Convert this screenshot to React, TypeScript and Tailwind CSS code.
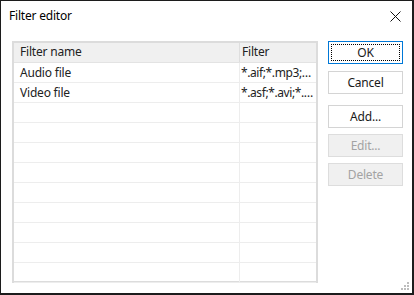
const rows = [
  { name: "Audio file", filter: "*.aif;*.mp3;*.wav;*.wma" },
  { name: "Video file", filter: "*.asf;*.avi;*.mpg;*.wmv" },
  ...Array.from({ length: 9 }, () => ({ name: "", filter: "" })),
];

function DialogButton({
  label,
  disabled,
  focused,
  className = "",
}: {
  label: string;
  disabled?: boolean;
  focused?: boolean;
  className?: string;
}) {
  const base = "h-[23px] w-[75px] text-[12px] leading-none flex items-center justify-center";
  if (focused) {
    return (
      <div className={`${base} border border-[#0078d7] bg-white p-[2px] ${className}`}>
        <div className="w-full h-full border border-dotted border-black flex items-center justify-center text-[#1a1a1a]">
          {label}
        </div>
      </div>
    );
  }
  return (
    <div
      className={`${base} border ${
        disabled
          ? "border-[#dddddd] bg-[#f0f0f0] text-[#a3a3a3]"
          : "border-[#d4d4d4] bg-white text-[#1a1a1a]"
      } ${className}`}
    >
      {label}
    </div>
  );
}

export default function App() {
  return (
    <div
      className="relative w-[414px] h-[295px] bg-white border-l border-t border-r-2 border-b-2 border-[#1c1c1c] overflow-hidden tracking-[-0.2px]"
      style={{ fontFamily: '"Noto Sans", "Liberation Sans", sans-serif' }}
    >
      <div className="flex items-center justify-between h-[30px] pl-[8px] pr-[10px]">
        <span className="text-[12px] text-black">Filter editor</span>
        <svg width="11" height="11" viewBox="0 0 11 11" className="mr-[1px]">
          <path d="M0.5 0.5 L10.5 10.5 M10.5 0.5 L0.5 10.5" stroke="#111" strokeWidth="1" />
        </svg>
      </div>

      <div className="flex mt-[10px] ml-[11px]">
        <div className="w-[306px] h-[242px] border-2 border-[#dcdcdc] text-[12px] text-[#222]">
          <div className="flex h-[20px] bg-[#f0f0f0] border-b border-[#e3e3e3]">
            <div className="w-[226px] pl-[6px] leading-[18px] border-r border-[#dedede]">Filter name</div>
            <div className="flex-1 pl-[2px] leading-[18px]">Filter</div>
          </div>
          {rows.map((r, i) => (
            <div key={i} className="flex h-[20px] border-b border-[#ededed]">
              <div className="w-[226px] pl-[6px] leading-[19px] border-r border-[#ededed]">{r.name}</div>
              <div className="flex-1 min-w-0 pl-[1px] pr-[2px] leading-[19px] truncate tracking-[-0.4px]">
                {r.filter}
              </div>
            </div>
          ))}
        </div>

        <div className="flex flex-col ml-[10px]">
          <DialogButton label="OK" focused />
          <DialogButton label="Cancel" className="mt-[7px]" />
          <DialogButton label="Add..." className="mt-[11px]" />
          <DialogButton label="Edit..." disabled className="mt-[6px]" />
          <DialogButton label="Delete" disabled className="mt-[6px]" />
        </div>
      </div>

      <svg width="12" height="12" viewBox="0 0 12 12" className="absolute right-[1px] bottom-[1px]">
        {[
          [8, 2],
          [5, 5],
          [8, 5],
          [2, 8],
          [5, 8],
          [8, 8],
        ].map(([x, y], i) => (
          <rect key={i} x={x} y={y} width="2" height="2" fill="#bdbdbd" />
        ))}
      </svg>
    </div>
  );
}
